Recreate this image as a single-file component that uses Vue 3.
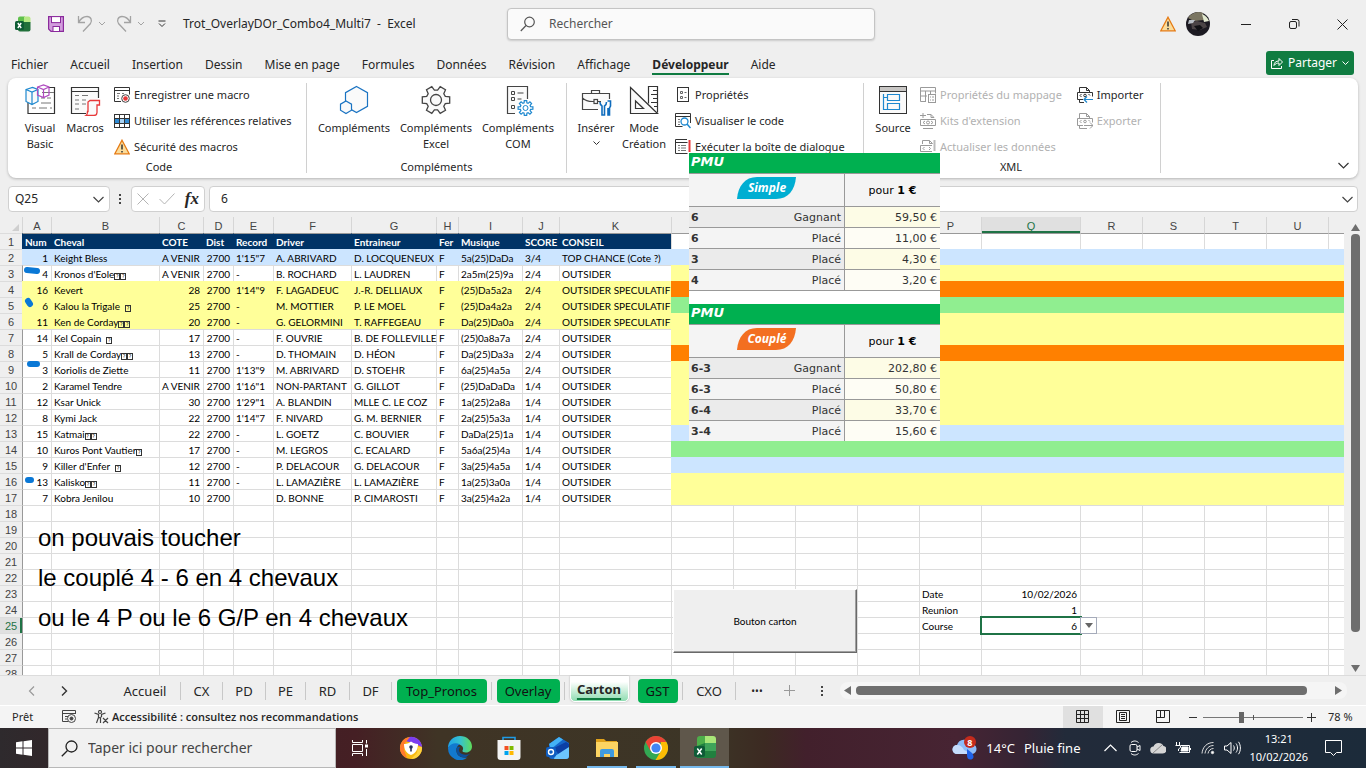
<template>
  <div class="window">
    <header class="titlebar">
      <div class="quick">
        <svg class="logo" width="16" height="16" viewBox="0 0 16 16">
          <path d="M3 2.5A2 2 0 0 1 5 .5h5v6H3z" fill="#5fc04b" />
          <path d="M9 .5h4.500a2 2 0 0 1 2 2v4H9z" fill="#b8e986" />
          <path d="M3 6h12.500v7.500a2 2 0 0 1-2 2H5a2 2 0 0 1-2-2z" fill="#21703a" />
          <rect x="0" y="5" width="9" height="9" rx="1.500" fill="#0d5c34" />
          <path d="M2.800 7l3.400 5M6.200 7l-3.400 5" stroke="#fff" stroke-width="1.400" />
        </svg>
        <button class="plain" aria-label="Enregistrer">
          <svg width="16" height="16" viewBox="0 0 16 16">
            <path d="M.6.600h14.800v14.800H3L.6 13z" fill="#d29ddd" stroke="#8a2a9c" stroke-width="1.200" />
            <rect x="3.500" y=".6" width="9" height="6" fill="#fff" stroke="#8a2a9c" />
            <rect x="5" y="10.500" width="6.500" height="5" fill="#fff" stroke="#8a2a9c" />
          </svg>
        </button>
        <button class="plain undo" aria-label="Annuler">
          <svg width="28" height="18" viewBox="0 0 28 18" fill="none" stroke="#a3a3a3">
            <path d="M1.500 1v6.500H8M1.500 7.500C4 3 7 1.500 10 1.500c4 0 5.500 4 3.500 7L6 16.500" stroke-width="1.300" />
            <path d="M22 7l3 3 3-3" />
          </svg>
        </button>
        <button class="plain redo" aria-label="Rétablir">
          <svg width="28" height="18" viewBox="0 0 28 18" fill="none" stroke="#a3a3a3">
            <path d="M14.500 1v6.500H8M14.500 7.500C12 3 9 1.500 6 1.500c-4 0-5.500 4-3.500 7l7.500 8" stroke-width="1.300" />
            <path d="M22 7l3 3 3-3" />
          </svg>
        </button>
        <button class="plain more" aria-label="Personnaliser">
          <svg width="8" height="8" viewBox="0 0 8 8" fill="none" stroke="#333"><path d="M.5 1h7M1 3.500l3 3 3-3" /></svg>
        </button>
        <span class="doc">Trot_OverlayDOr_Combo4_Multi7&nbsp; -&nbsp; Excel</span>
      </div>
      <label class="search">
        <svg width="16" height="16" viewBox="0 0 16 16" fill="none" stroke="#555" stroke-width="1.200"><circle cx="9.500" cy="6" r="4.800" /><path d="M6 9.500L.8 15" /></svg>
        <input type="text" placeholder="Rechercher" aria-label="Rechercher">
      </label>
      <div class="controls">
        <svg class="warn" width="16" height="16" viewBox="0 0 16 16"><path d="M8 1.200L15.200 14.800H.8z" fill="#fbdc9a" stroke="#e57a13" stroke-width="1.300" /><path d="M8 5.500v5M8 12v1.500" stroke="#333" stroke-width="1.500" /></svg>
        <svg class="avatar" width="24" height="24" viewBox="0 0 24 24">
          <circle cx="12" cy="12" r="12" fill="#1c1a22" />
          <path d="M2 6a12 12 0 0 1 15-5l1 7-10 1z" fill="#7b7662" />
          <path d="M16 2a12 12 0 0 1 7 7l-5 1z" fill="#e3ead0" />
          <path d="M5 10l6-1 8 2 2 4-7 3-8-1z" fill="#4b4446" />
          <path d="M3 8l6 0-2 3-5 1z" fill="#b9bfc6" />
          <path d="M8 14l6-1 3 3-5 3z" fill="#101014" />
        </svg>
        <button class="plain win" aria-label="Réduire"><svg width="11" height="12"><path d="M0 6.500h10" stroke="#222" /></svg></button>
        <button class="plain win" aria-label="Restaurer"><svg width="11" height="12" fill="none" stroke="#222"><rect x=".5" y="3.500" width="7" height="7" rx="1.500" /><path d="M3 1.500h5a2 2 0 0 1 2 2v5" /></svg></button>
        <button class="plain win" aria-label="Fermer"><svg width="11" height="12" stroke="#222"><path d="M.5 1.500l10 10M10.500 1.500l-10 10" /></svg></button>
      </div>
    </header>

    <nav class="tabs">
      <a v-for="t in tabs" :key="t" href="#" :class="{ active: t === 'Développeur' }">{{ t }}</a>
      <button class="share">
        <svg width="12" height="12" viewBox="0 0 12 12" fill="none" stroke="#fff"><path d="M3 3.500H.5v8h10V9M3 8.500c0-3 2-4.500 5-4.500V1.500l3.500 3.500L8 8.500V6C6 6 4.500 6.500 3 8.500z" /></svg>
        Partager
        <svg width="7" height="5" fill="none" stroke="#fff"><path d="M.5.500l3 3 3-3" /></svg>
      </button>
    </nav>

    <section class="ribbon">
      <div class="group code">
        <div class="tools">
          <button class="big w-vb">
            <svg width="32" height="32" viewBox="0 0 32 32" fill="none">
              <path d="M4 18v11.500h26.500v-26H24" stroke="#333" stroke-width="1.200" />
              <path d="M18 8.500h12M17 14h4M23 14h4M17 19h10M8 24h4M15 24h8M26 24h2" stroke="#777" />
              <path d="M2 5.500l6.500-2 5.500 2v12l-6 3-6-3zM2 5.500l6 2.500 6-2.500M8 8v12.500" fill="#fafafa" stroke="#1e88cf" stroke-width="1.200" />
              <path d="M13.500 3l6-2 5.500 2v8l-5.500 2.500-6-2.500zM13.500 3l6 2.500L25 3M19.500 5.500v8" stroke="#b04bc0" stroke-width="1.200" />
            </svg>
            <span>Visual<br>Basic</span>
          </button>
          <button class="big w-macros">
            <svg width="32" height="32" viewBox="0 0 32 32" fill="none">
              <path d="M17 29.500H2.500v-26H29.500V14M2.500 7.500h27" stroke="#333" stroke-width="1.200" fill="#fafafa" />
              <path d="M6 11.500h4M13 11.500h6M6 16h4M13 16h4M6 20h4M13 20h4M6 25h4" stroke="#777" />
              <path d="M21 16.500h9.500V21H28v7.500c0 2-1 3-3 3h-8c1.500-1 1.500-2 1.500-4H19V18z" fill="#fafafa" stroke="#e8393a" stroke-width="1.300" />
            </svg>
            <span>Macros</span>
          </button>
          <div class="stack">
            <button class="small">
              <svg width="16" height="16" viewBox="0 0 16 16" fill="none"><path d="M7 14.500H.5V.5h15v7M.5 3.500h15" stroke="#333" /><path d="M3 6.500h3M3 9h2M3 11.500h2M8 6.500h2" stroke="#777" /><circle cx="11.500" cy="11.500" r="3.800" stroke="#444" fill="#fff" /><circle cx="11.500" cy="11.500" r="2.300" fill="#e8393a" /></svg>
              Enregistrer une macro
            </button>
            <button class="small">
              <svg width="16" height="14" viewBox="0 0 16 14" fill="none"><rect x=".5" y=".5" width="15" height="13" stroke="#333" fill="#fff" /><rect x="1" y="4.500" width="4" height="5" fill="#2f8ad2" /><rect x="11" y="4.500" width="4" height="5" fill="#2f8ad2" /><rect x="6" y="4.500" width="4" height="5" fill="#a9d2f3" /><path d="M5.500 0v14M10.500 0v14M0 4.500h16M0 9.500h16" stroke="#333" /></svg>
              Utiliser les références relatives
            </button>
            <button class="small">
              <svg width="16" height="16" viewBox="0 0 16 16"><path d="M8 1.200L15.200 14.800H.8z" fill="#fbdc9a" stroke="#e57a13" stroke-width="1.300" /><path d="M8 5.500v5M8 12v1.500" stroke="#333" stroke-width="1.500" /></svg>
              Sécurité des macros
            </button>
          </div>
        </div>
        <div class="caption">Code</div>
      </div>

      <div class="group addins">
        <div class="tools">
          <button class="big w-add">
            <svg width="32" height="32" viewBox="0 0 32 32" fill="#fafafa" stroke="#1a73c2" stroke-width="1.200"><path d="M18.500 2.500l11 6.200v13.600l-11 6.200-11-6.200V8.700z" /><path d="M8 17l5.500 3.200v6L8 29.500l-5.500-3.300v-6z" /></svg>
            <span>Compléments</span>
          </button>
          <button class="big w-add">
            <svg width="32" height="32" viewBox="0 0 32 32" fill="#fafafa" stroke="#444" stroke-width="1.300"><path :d="gear(16, 16, 14, 10, 6)" /><circle cx="16" cy="16" r="5.500" /></svg>
            <span>Compléments<br>Excel</span>
          </button>
          <button class="big w-add">
            <svg width="32" height="32" viewBox="0 0 32 32" fill="none" stroke="#444"><path d="M13 29.500H5.500v-27h20V15" fill="#fafafa" stroke-width="1.200" /><path d="M9.500 7.500h3v3h-3zM9.500 13.500h3v3h-3zM9.500 21.500h3v3h-3zM15.500 9h6M15.500 15h4" /><path :d="gear(23.500, 24, 7.500, 5.300, 8)" stroke="#1e88cf" fill="#fff" stroke-width="1.200" /><circle cx="23.500" cy="24" r="2.500" stroke="#1e88cf" /></svg>
            <span>Compléments<br>COM</span>
          </button>
        </div>
        <div class="caption">Compléments</div>
      </div>

      <div class="group forms">
        <div class="tools">
          <button class="big w-ins">
            <svg width="32" height="32" viewBox="0 0 32 32" fill="none" stroke="#444" stroke-width="1.200"><path d="M11.500 9V6.500h8V9M18 25.500H2.500V9.500h27V15M2.500 14c4 4 8 3.500 11.500 3.500M18 17.500h3" fill="#fafafa" /><rect x="14" y="15.500" width="3.500" height="4" /><path d="M20 18c0 3 1.500 3.500 2 4v9h2.500v-9c1-.5 2-1.500 2-4M27.500 17h3v5l-1 2v7h-1.500v-7" stroke="#0f6cbd" stroke-width="1.600" /></svg>
            <span>Insérer</span>
            <svg width="7" height="5" fill="none" stroke="#333"><path d="M.5.500l3 3 3-3" /></svg>
          </button>
          <button class="big w-mode">
            <svg width="32" height="32" viewBox="0 0 32 32" fill="none" stroke="#333" stroke-width="1.200"><path d="M2.500 3.500v26h27zM7.500 17v7.500h8z" fill="#fafafa" /><path d="M20.500 19.500v-17h9v26M29 6.500h-4M29 10.500h-6M29 14.500h-4M29 18.500h-6M29 22.500h-3" /></svg>
            <span>Mode<br>Création</span>
          </button>
          <div class="stack">
            <button class="small">
              <svg width="16" height="16" viewBox="0 0 16 16" fill="none" stroke="#333"><rect x="2.500" y=".5" width="11" height="14" /><path d="M5.500 4.500h2v2h-2zM5.500 9.500h2v2h-2zM9.500 5.500h2M9.500 10.500h2" stroke="#666" /></svg>
              Propriétés
            </button>
            <button class="small">
              <svg width="16" height="16" viewBox="0 0 16 16" fill="none"><path d="M15.500 10V.5H.5v13h7M.5 3.500h15" stroke="#333" /><path d="M3 6.500h2M3 9h2M3 11.500h2" stroke="#777" /><circle cx="9.500" cy="8.500" r="3.500" stroke="#1e88cf" stroke-width="1.300" /><path d="M12 11l3.500 4" stroke="#1e88cf" stroke-width="1.500" /></svg>
              Visualiser le code
            </button>
            <button class="small">
              <svg width="16" height="16" viewBox="0 0 16 16" fill="none"><path d="M12 .5H.5v14h12M.5 3.500h12" stroke="#333" /><path d="M3 6.500h2M6 6.500h5M3 9h2M6 9h5M3 11.500h2M6 11.500h5" stroke="#777" /><path d="M14.500 1v12" stroke="#e8393a" stroke-width="2" /></svg>
              Exécuter la boîte de dialogue
            </button>
          </div>
        </div>
      </div>

      <div class="group xml">
        <div class="tools">
          <button class="big w-src">
            <svg width="32" height="32" viewBox="0 0 32 32" fill="none"><rect x="2.500" y="2.500" width="27" height="27" stroke="#333" fill="#fafafa" /><rect x="3" y="3" width="26" height="4" fill="#c8c6c4" /><path d="M2.500 7.500h27" stroke="#333" /><path d="M6.500 10v15.500h4M6.500 13.500h4M10.500 10.500h12v6h-12zM10.500 19.500h12v6h-12z" stroke="#1e88cf" stroke-width="1.200" /></svg>
            <span>Source</span>
          </button>
          <div class="stack">
            <button class="small" disabled>
              <svg width="16" height="16" viewBox="0 0 16 16" fill="none" stroke="#9a9a9a"><path d="M6 14.500H.5V.5h15v6M0 4h16M0 9h7M5.500 4v11M10.500 4v3" /><rect x="8.500" y="7.500" width="7" height="8" /><path d="M10 10h1M12 10h2M10 13h1M12 13h2" /></svg>
              Propriétés du mappage
            </button>
            <button class="small" disabled>
              <svg width="16" height="16" viewBox="0 0 16 16" fill="none" stroke="#9a9a9a"><path d="M3 0v5M0 2.500h6M7 1.500h4l3 3M11 1.500v3h3M.5 6.500h15v6H.5zM3 15.500h10" /><path d="M5 8L3 9.500 5 11M11 8l2 1.500L11 11" /><circle cx="8" cy="9.500" r="1.500" /></svg>
              Kits d'extension
            </button>
            <button class="small" disabled>
              <svg width="16" height="16" viewBox="0 0 16 16" fill="none" stroke="#9a9a9a"><path d="M2.500 5V1.500h7l3 3M9.500 1.500v3h3M12 6.500H.5v6H12M2.500 15.500h10" /><path d="M4.500 8L3 9.500 4.500 11M9 8l1.500 1.500L9 11" /><path d="M14.500 1v11" stroke-width="2" stroke="#bbb" /></svg>
              Actualiser les données
            </button>
          </div>
          <div class="stack io">
            <button class="small">
              <svg width="16" height="16" viewBox="0 0 16 16" fill="none" stroke="#333"><path d="M2.500 5V.5h7l3 3V5M9.500.500v3h3M6 12.500H.5v-7h15v4M2.500 12v3.500H7" /><path d="M4.500 7L3 8.500 4.500 10M11.500 7L13 8.500" /><circle cx="8" cy="8.500" r="1.300" /><path d="M16 12.500H7M10 9.500l-3 3 3 3" stroke="#1e88cf" stroke-width="1.200" /></svg>
              Importer
            </button>
            <button class="small" disabled>
              <svg width="16" height="16" viewBox="0 0 16 16" fill="none" stroke="#9a9a9a"><path d="M2.500 5V.5h7l3 3V5M9.500.500v3h3M6 12.500H.5v-7h15v4M2.500 12v3.500H10" /><path d="M4.500 7L3 8.500 4.500 10M11.500 7L13 8.500" /><circle cx="8" cy="8.500" r="1.300" /><path d="M7 12.500h9M13 9.500l3 3-3 3" /></svg>
              Exporter
            </button>
          </div>
        </div>
        <div class="caption">XML</div>
      </div>
      <button class="plain collapse" aria-label="Réduire le ruban"><svg width="11" height="7" fill="none" stroke="#333" stroke-width="1.200"><path d="M.5 1l5 5 5-5" /></svg></button>
    </section>

    <section class="formula">
      <div class="box name">
        <input type="text" value="Q25" aria-label="Zone Nom">
        <svg width="11" height="7" fill="none" stroke="#444" stroke-width="1.200"><path d="M.5 1l5 5 5-5" /></svg>
      </div>
      <svg class="dots" width="3" height="12" fill="#444"><path d="M0 1h2v2H0zM0 5h2v2H0zM0 9h2v2H0z" /></svg>
      <div class="box fx">
        <svg width="12" height="12" stroke="#b4b4b4"><path d="M.5.500l11 11M11.500.500l-11 11" /></svg>
        <svg width="16" height="12" fill="none" stroke="#b4b4b4"><path d="M.5 6l5 5L15.500.500" /></svg>
        <i>fx</i>
      </div>
      <div class="box bar">
        <input type="text" value="6" aria-label="Barre de formule">
        <svg width="11" height="7" fill="none" stroke="#444" stroke-width="1.200"><path d="M.5 1l5 5 5-5" /></svg>
      </div>
    </section>

    <main class="sheet">
      <div class="grid">
        <table>
          <colgroup>
            <col class="c-row">
            <col v-for="c in cols" :key="c" :class="'c-' + c">
            <col>
          </colgroup>
          <thead>
            <tr>
              <th class="corner"><svg width="7" height="7"><path d="M7 0v7H0z" fill="#cfcfcf" /></svg></th>
              <th v-for="c in cols" :key="c" :class="{ current: c === 'Q' }">{{ c }}</th>
              <th></th>
            </tr>
          </thead>
          <tbody>
            <tr v-for="n in 28" :key="n">
              <th :class="{ current: n === 25 }">{{ n }}</th>
              <td v-for="(c, i) in allCols" :key="c" :class="cellClass(n, c, i)">
                <template v-if="n <= 17 && c === 'B'">{{ horse(n).name }}<i v-for="k in horse(n).boxes" :key="k" class="tofu">?</i></template>
                <template v-else>{{ cell(n, c, i) }}</template>
                <button v-if="n === 25 && c === 'Q'" class="drop" aria-label="Choisir la course"><svg width="8" height="5"><path d="M0 0h8L4 5z" fill="#666" /></svg></button>
              </td>
            </tr>
          </tbody>
        </table>
        <svg class="marks" width="24" height="280" viewBox="0 0 24 280" stroke="#0a78d6" stroke-width="6" stroke-linecap="round" fill="none">
          <path d="M5 53l10 1M6 84l2 3M8 147h7M6 263h3" />
        </svg>
        <button class="carton">Bouton carton</button>
        <p class="memo">on pouvais toucher<br>le couplé 4 - 6 en 4 chevaux<br>ou le 4 P ou le 6 G/P en 4 chevaux</p>
      </div>
      <div class="vscroll">
        <svg width="9" height="7"><path d="M4.500 0L9 7H0z" fill="#6e6e6e" /></svg>
        <div class="vthumb"></div>
        <svg width="9" height="7"><path d="M4.500 7L9 0H0z" fill="#6e6e6e" /></svg>
      </div>
    </main>

    <section class="sheets">
      <div class="arrows">
        <svg width="7" height="10" fill="none" stroke="#999" stroke-width="1.200"><path d="M6 .5L1.500 5 6 9.500" /></svg>
        <svg width="7" height="10" fill="none" stroke="#333" stroke-width="1.400"><path d="M1 .5L5.500 5 1 9.500" /></svg>
      </div>
      <div v-for="s in sheets" :key="s.name" class="tab" :class="s.kind" :style="{ width: s.w + 'px' }">
        <button>{{ s.name }}</button>
      </div>
      <button class="plain tool">•••</button>
      <button class="plain tool add" aria-label="Nouvelle feuille"><svg width="11" height="11" stroke="#999"><path d="M5.500 0v11M0 5.500h11" /></svg></button>
      <svg class="vdots" width="3" height="12" fill="#444"><path d="M0 1h2v2H0zM0 5h2v2H0zM0 9h2v2H0z" /></svg>
      <div class="hscroll">
        <svg width="7" height="9"><path d="M0 4.500L7 0v9z" fill="#6e6e6e" /></svg>
        <div class="hthumb"></div>
        <svg width="7" height="9"><path d="M7 4.500L0 0v9z" fill="#6e6e6e" /></svg>
      </div>
    </section>

    <footer class="status">
      <span class="ready">Prêt</span>
      <svg width="15" height="14" viewBox="0 0 15 14" fill="none" stroke="#444"><path d="M6 11.500H.5V.5h13V4M.5 3.500h13M3 6.500h3M3 9h2" /><circle cx="9.500" cy="8.500" r="4" /><circle cx="9.500" cy="8.500" r="1.500" fill="#444" /></svg>
      <svg class="acc" width="15" height="14" viewBox="0 0 15 14" fill="none" stroke="#444" stroke-width="1.200"><circle cx="6" cy="2" r="1.500" /><path d="M.5 3l4 1.500v3L2.500 13M11.500 3l-4 1.500v2.500M4.500 8l3-1M6.500 8v5M9 8l5 5M14 8l-5 5" /></svg>
      <b>Accessibilité : consultez nos recommandations</b>
      <div class="views">
        <button class="view on" aria-label="Normal"><svg width="14" height="14" fill="none" stroke="#222"><path d="M.5.500h12v12H.5zM4.500.500v12M8.500.500v12M.5 4.500h12M.5 8.500h12" /></svg></button>
        <button class="view" aria-label="Mise en page"><svg width="14" height="14" fill="none" stroke="#222"><path d="M.5.500h13v12H.5zM3.500 2.500h7v8h-7zM5 4.500h4M5 6.500h4M5 8.500h4" /></svg></button>
        <button class="view" aria-label="Aperçu des sauts de page"><svg width="14" height="14" fill="none" stroke="#222"><path d="M.5.500h13v12H.5zM4.500.500v7M8.500.500v7H.5" /></svg></button>
        <svg class="minus" width="8" height="9" stroke="#333"><path d="M0 4.500h8" /></svg>
        <input type="range" min="0" max="100" value="38" aria-label="Zoom">
        <svg width="9" height="9" stroke="#333"><path d="M0 4.500h9M4.500 0v9" /></svg>
        <span class="pct">78 %</span>
      </div>
    </footer>

    <footer class="taskbar">
      <button class="start" aria-label="Démarrer"><svg width="16" height="16" fill="#fff"><path d="M0 2.200l6.500-.9v6.200H0zM7.500 1.200L16 0v7.500H7.500zM0 8.500h6.500v6.200L0 13.800zM7.500 8.500H16V16l-8.500-1.200z" /></svg></button>
      <label class="tsearch">
        <svg width="17" height="17" fill="none" stroke="#222" stroke-width="1.300"><circle cx="10.500" cy="6.500" r="5.500" /><path d="M6.500 10.500L.8 16.200" /></svg>
        <input type="text" placeholder="Taper ici pour rechercher" aria-label="Taper ici pour rechercher">
      </label>
      <button class="app"><svg width="17" height="16" fill="none" stroke="#fff"><path d="M.5 0v2.500h10V0M.5 4.500h10v7H.5zM.5 16v-2.500h10V16M14.500 0v3.500M14.500 9v7" /><path d="M13 4.500h3v3h-3z" fill="#fff" stroke="none" /></svg></button>
      <button class="app gap">
        <svg width="24" height="24" viewBox="0 0 24 24"><circle cx="12" cy="12" r="11" fill="#f8b912" /><path d="M10 1A11 11 0 0 1 23 11L14 7 6 5z" fill="#7a3df0" /><path d="M1 13A11 11 0 0 1 11 1L6 7 5 14l3 8A11 11 0 0 1 1 13z" fill="#ff7a2d" /><path d="M23 11a11 11 0 0 1-11 12l6-6 1-6z" fill="#ffd23e" /><path d="M5 8c4 0 5-1 7-2.500C14 7 16 8 19 8c0 5-2 9-7 11-5-2-7-6-7-11z" fill="#fff" /><circle cx="12" cy="11" r="1.800" fill="#26315c" /><path d="M11.200 12h1.600v3.500h-1.600z" fill="#26315c" /></svg>
      </button>
      <button class="app">
        <svg width="24" height="24" viewBox="0 0 24 24">
          <defs>
            <linearGradient id="wave" x1="0" x2="1"><stop offset="0" stop-color="#1fa2e8" /><stop offset="0.500" stop-color="#35c1d0" /><stop offset="1" stop-color="#5fdc5a" /></linearGradient>
          </defs>
          <path d="M0 12C0 5 5 0 12 0s12 5 12 10.500c0 3.500-2.500 6-6 6-2.500 0-4-1-3.500-2 .8-1 1-3-.5-4.500-3-3-10-3-14 2z" fill="url(#wave)" />
          <path d="M0 12c2-4.500 8-6 12-3.500-3 1-4 4-3.500 7C9 20 14 22.500 19.500 21.500A12 12 0 0 1 0 12z" fill="#1279cf" />
          <path d="M8.500 12.500C7.500 18 12 22 17.500 21.500l5-4C19 19.500 13.500 19 11.500 16c-1-1.500-.5-3.500.5-5-1.500-.5-3 0-3.500 1.500z" fill="#0b4f9c" />
        </svg>
      </button>
      <button class="app">
        <svg width="24" height="24" viewBox="0 0 24 24"><path d="M6 6V1.500h12V6" fill="none" stroke="#1f9be6" stroke-width="1.600" /><path d="M.5 4h23v17a3 3 0 0 1-3 3h-17a3 3 0 0 1-3-3z" fill="#f4f4f4" /><path d="M7.500 10h4v4h-4z" fill="#f25022" /><path d="M12.500 10h4v4h-4z" fill="#7fba00" /><path d="M7.500 15h4v4h-4z" fill="#00a4ef" /><path d="M12.500 15h4v4h-4z" fill="#ffb900" /></svg>
      </button>
      <button class="app">
        <svg width="24" height="24" viewBox="0 0 24 24"><path d="M3 8L13 1l10 6v13a3 3 0 0 1-3 3H6a3 3 0 0 1-3-3z" fill="#1565c8" /><path d="M3 8l10-7 4 2.500L5 13z" fill="#43b2f5" /><path d="M8 12l12-6 3 2v4l-10 7z" fill="#0b3fa5" /><path d="M9 20l14-9v9a3 3 0 0 1-3 3H8z" fill="#6cc6ff" /><rect y="11" width="10" height="10" rx="2" fill="#0f5dc0" /><circle cx="5" cy="16" r="2.500" fill="none" stroke="#fff" stroke-width="1.400" /></svg>
      </button>
      <button class="app open">
        <svg width="24" height="24" viewBox="0 0 24 24"><path d="M1 3h8l2 2h11v4H1z" fill="#e0a21b" /><path d="M1 6h22v15H1z" fill="#fcd462" /><path d="M5 21v-6a2 2 0 0 1 2-2h10a2 2 0 0 1 2 2v6h-4v-3H9v3z" fill="#3f9be0" /></svg>
      </button>
      <button class="app open">
        <svg width="24" height="24" viewBox="0 0 24 24"><circle cx="12" cy="12" r="12" fill="#33a853" /><path d="M1.600 6A12 12 0 0 1 22.400 6L12 7 6.500 15z" fill="#ea4335" /><path d="M22.400 6A12 12 0 0 1 11.500 24L17 15V6z" fill="#fbbc05" /><circle cx="12" cy="12" r="6" fill="#fff" /><circle cx="12" cy="12" r="4.600" fill="#4285f4" /></svg>
      </button>
      <button class="app current">
        <svg width="24" height="24" viewBox="0 0 24 24"><path d="M4 4a3 3 0 0 1 3-3h7v10H4z" fill="#4dae4a" /><path d="M12 1h8a3 3 0 0 1 3 3v5H12z" fill="#a8e678" /><path d="M4 11l8-3h11v12a3 3 0 0 1-3 3H4z" fill="#21803f" /><path d="M12 8h11v8H12z" fill="#3fa45a" /><rect x="1" y="11" width="11" height="11" rx="2" fill="#0e5c37" /><path d="M4.300 13.500l4.400 6M8.700 13.500l-4.400 6" stroke="#fff" stroke-width="1.500" /></svg>
      </button>
      <div class="tray">
        <div class="weather">
          <svg width="25" height="24" viewBox="0 0 25 24"><path d="M5 18a4.500 4.500 0 0 1 0-9 7.500 7.500 0 0 1 14-1 5 5 0 0 1 1 10z" fill="#8dbcf8" /><path d="M5 18a4.500 4.500 0 0 1 0-9c3 0 6 2 7 5l8 4z" fill="#c5dcfb" /><path d="M15 13l5 4c3 4 1 6.500-1.500 6.500S15 22 15 19z" fill="#1f62e8" /><circle cx="18" cy="6" r="6" fill="#c42b1c" /><text x="15.200" y="9.500">8</text></svg>
          <span>14°C</span>
          <span>Pluie fine</span>
        </div>
        <svg class="up" width="13" height="8" fill="none" stroke="#fff" stroke-width="1.200"><path d="M.5 7l6-6 6 6" /></svg>
        <svg width="12" height="16" fill="none" stroke="#fff"><path d="M2 2.500c2.500-2 5-2 7.500 0M2 13.500c2.500 2 5 2 7.500 0" /><rect x="1" y="4.500" width="7" height="7" rx="1.500" /><path d="M8 7l3-1.500v5L8 9" /></svg>
        <svg width="16" height="12"><path d="M4 11.500a3.500 3.500 0 0 1-.5-7 5.500 5.500 0 0 1 10-.5 3.800 3.800 0 0 1-1 7.500z" fill="#d5d5d5" /><path d="M3 11L12 3" stroke="#8b8b8b" /></svg>
        <svg width="17" height="12" fill="none" stroke="#fff"><path d="M1.500 0v3M4.500 0v3M.5 3.500h5v2l-2 1.500v2" /><path d="M6 3.500h8.500v7h-10M15.500 6v2" /><path d="M7 5h6v4H6z" fill="#fff" /></svg>
        <svg width="14" height="14" viewBox="0 0 14 14" fill="none" stroke="#ddd"><path d="M1 12.500C1.500 6 6 1.500 12.500 1.500M4 12.500C4.500 8 8 4.500 12.500 4.500M7 12.500c.5-3 2.500-5 5.500-5" /><circle cx="11.500" cy="11.500" r="1.200" fill="#fff" /></svg>
        <svg width="17" height="14" fill="none" stroke="#fff"><path d="M.5 5h2.500l4-3.500v11L3 9H.5zM9.500 4.500c1 1.500 1 3.500 0 5M12 2.500c2 2.500 2 6.500 0 9M14.500.800c2.500 3.500 2.500 9 0 12.400" /></svg>
        <div class="clock">13:21<br>10/02/2026</div>
        <svg class="notif" width="17" height="16" fill="none" stroke="#fff"><path d="M.5.500h16v12h-5L8.500 15.500l-3-3h-5z" /></svg>
      </div>
    </footer>

    <aside class="results">
      <section v-for="r in results" :key="r.title" class="pmu">
        <h3>PMU</h3>
        <table>
          <thead>
            <tr>
              <th colspan="2">
                <svg width="60" height="22" viewBox="0 0 60 22"><path d="M0 22C1 9 8 0 20 0h39C58 13 51 22 39 22z" :fill="r.color" /><text x="30" y="15" text-anchor="middle">{{ r.title }}</text></svg>
              </th>
              <th class="price">pour <b>1 €</b></th>
            </tr>
          </thead>
          <tbody>
            <tr v-for="(l, i) in r.lines" :key="i">
              <th>{{ l[0] }}</th>
              <td>{{ l[1] }}</td>
              <td class="price">{{ l[2] }}</td>
            </tr>
          </tbody>
        </table>
      </section>
    </aside>
  </div>
</template>

<script setup>
const tabs = ['Fichier', 'Accueil', 'Insertion', 'Dessin', 'Mise en page', 'Formules', 'Données', 'Révision', 'Affichage', 'Développeur', 'Aide']

const cols = 'ABCDEFGHIJKLMNOPQRSTU'.split('')
const allCols = [...cols, 'V']

// each * after a horse's name is a character the font has no glyph for
const data = [
  ['Num', 'Cheval', 'COTE', 'Dist', 'Record', 'Driver', 'Entraineur', 'Fer', 'Musique', 'SCORE', 'CONSEIL'],
  [1, 'Keight Bless', 'A VENIR', 2700, '1\'15"7', 'A. ABRIVARD', 'D. LOCQUENEUX', 'F', '5a(25)DaDa', '3/4', 'TOP CHANCE (Cote ?)'],
  [4, "Kronos d'Eole**", 'A VENIR', 2700, '-', 'B. ROCHARD', 'L. LAUDREN', 'F', '2a5m(25)9a', '2/4', 'OUTSIDER'],
  [16, 'Kevert', 28, 2700, '1\'14"9', 'F. LAGADEUC', 'J.-R. DELLIAUX', 'F', '(25)Da5a2a', '2/4', 'OUTSIDER SPECULATIF'],
  [6, 'Kalou la Trigale\u00a0 *', 25, 2700, '-', 'M. MOTTIER', 'P. LE MOEL', 'F', '(25)Da4a2a', '2/4', 'OUTSIDER SPECULATIF'],
  [11, 'Ken de Corday**', 20, 2700, '-', 'G. GELORMINI', 'T. RAFFEGEAU', 'F', 'Da(25)Da0a', '2/4', 'OUTSIDER SPECULATIF'],
  [14, 'Kel Copain\u00a0 *', 17, 2700, '-', 'F. OUVRIE', 'B. DE FOLLEVILLE', 'F', '(25)0a8a7a', '2/4', 'OUTSIDER'],
  [5, 'Krall de Corday**', 13, 2700, '-', 'D. THOMAIN', 'D. HÉON', 'F', 'Da(25)Da3a', '2/4', 'OUTSIDER'],
  [3, 'Koriolis de Ziette', 11, 2700, '1\'13"9', 'M. ABRIVARD', 'D. STOEHR', 'F', '6a(25)4a5a', '2/4', 'OUTSIDER'],
  [2, 'Karamel Tendre', 'A VENIR', 2700, '1\'16"1', 'NON-PARTANT', 'G. GILLOT', 'F', '(25)DaDaDa', '1/4', 'OUTSIDER'],
  [12, 'Ksar Unick', 30, 2700, '1\'29"1', 'A. BLANDIN', 'MLLE C. LE COZ', 'F', '1a(25)2a8a', '1/4', 'OUTSIDER'],
  [8, 'Kymi Jack', 22, 2700, '1\'14"7', 'F. NIVARD', 'G. M. BERNIER', 'F', '2a(25)5a3a', '1/4', 'OUTSIDER'],
  [15, 'Katmai**', 22, 2700, '-', 'L. GOETZ', 'C. BOUVIER', 'F', 'DaDa(25)1a', '1/4', 'OUTSIDER'],
  [10, 'Kuros Pont Vautier*', 17, 2700, '-', 'M. LEGROS', 'C. ECALARD', 'F', '5a6a(25)4a', '1/4', 'OUTSIDER'],
  [9, "Killer d'Enfer\u00a0 *", 12, 2700, '-', 'P. DELACOUR', 'G. DELACOUR', 'F', '3a(25)4a5a', '1/4', 'OUTSIDER'],
  [13, 'Kalisko**', 11, 2700, '-', 'L. LAMAZIÈRE', 'L. LAMAZIÈRE', 'F', '1a(25)3a0a', '1/4', 'OUTSIDER'],
  [7, 'Kobra Jenilou', 10, 2700, '', 'D. BONNE', 'P. CIMAROSTI', 'F', '3a(25)4a2a', '1/4', 'OUTSIDER'],
]

const extra = {
  P23: 'Date', Q23: '10/02/2026',
  P24: 'Reunion', Q24: '1',
  P25: 'Course', Q25: '6',
}

// fill of the L:V band, one entry per sheet row
const bands = ['', '', 'blue', 'yellow', 'orange', 'green', 'yellow', 'yellow', 'orange', 'yellow', 'yellow', 'yellow', 'yellow', 'blue', 'green', 'blue', 'yellow', 'yellow']

const cell = (n, c, i) => {
  if (n <= data.length && i < 11) return data[n - 1][i]
  return extra[c + n] || ''
}

const horse = (n) => {
  const parts = data[n - 1][1].split('*')
  return { name: parts[0], boxes: parts.length - 1 }
}

const cellClass = (n, c, i) => {
  const out = []
  if (i < 11) {
    if (n === 1) out.push('head')
    if (n === 2) out.push('blue')
    if (n >= 4 && n <= 6) out.push('yellow')
  } else if (bands[n]) {
    out.push(bands[n])
  }
  if (n > 1 && typeof cell(n, c, i) === 'number') out.push('num')
  if (c === 'Q') out.push('num')
  if (n === 25 && c === 'Q') out.push('selected')
  return out
}

const sheets = [
  { name: 'Accueil', w: 71 },
  { name: 'CX', w: 42 },
  { name: 'PD', w: 43 },
  { name: 'PE', w: 40 },
  { name: 'RD', w: 44 },
  { name: 'DF', w: 42 },
  { name: 'Top_Pronos', w: 100, kind: 'green' },
  { name: 'Overlay', w: 73, kind: 'green' },
  { name: 'Carton', w: 68, kind: 'front' },
  { name: 'GST', w: 50, kind: 'green' },
  { name: 'CXO', w: 53 },
]

const results = [
  {
    title: 'Simple',
    color: '#00aed2',
    lines: [['6', 'Gagnant', '59,50 €'], ['6', 'Placé', '11,00 €'], ['3', 'Placé', '4,30 €'], ['4', 'Placé', '3,20 €']],
  },
  {
    title: 'Couplé',
    color: '#f36f21',
    lines: [['6-3', 'Gagnant', '202,80 €'], ['6-3', 'Placé', '50,80 €'], ['6-4', 'Placé', '33,70 €'], ['3-4', 'Placé', '15,60 €']],
  },
]

const gear = (cx, cy, outer, inner, teeth) => {
  const pts = []
  const w = 2.2 / teeth
  for (let k = 0; k < teeth; k++) {
    const a = (k * 2 * Math.PI) / teeth
    for (const [da, r] of [[-w, inner], [-w * 0.6, outer], [w * 0.6, outer], [w, inner]]) {
      pts.push((cx + r * Math.cos(a + da)).toFixed(1) + ' ' + (cy + r * Math.sin(a + da)).toFixed(1))
    }
  }
  return 'M' + pts.join('L') + 'z'
}
</script>

<style>
body {
  background: #efefef;
}
</style>

<style scoped>
.window {
  position: relative;
  display: flex;
  flex-direction: column;
  height: 100vh;
  overflow: hidden;
  background: #efefef;
  color: #262626;
  font: 12px/16px "Noto Sans", "Open Sans", sans-serif;
}

.window * {
  box-sizing: border-box;
}

button,
input {
  font: inherit;
  color: inherit;
  border: 0;
  margin: 0;
  padding: 0;
  background: none;
}

svg {
  display: block;
  flex: none;
}

/* title bar */
.titlebar {
  display: grid;
  grid-template-columns: 507px minmax(160px, 368px) 1fr;
  align-items: center;
  flex: none;
  height: 48px;
}

.quick {
  display: flex;
  align-items: center;
  padding-left: 15px;
}

.logo {
  margin-right: 17px;
}

.undo {
  margin-left: 13px;
}

.redo {
  margin-left: 11px;
}

.more {
  margin: 0 17px 0 14px;
}

.doc {
  white-space: nowrap;
}

.search {
  display: flex;
  align-items: center;
  gap: 13px;
  height: 32px;
  padding: 0 12px;
  background: #fafafa;
  border: 1px solid #c4c4c4;
  border-radius: 4px;
  box-shadow: 0 1px 2px rgba(0, 0, 0, 0.15);
}

.search input {
  flex: 1;
  min-width: 0;
}

input::placeholder {
  color: #555;
  opacity: 1;
}

.controls {
  display: flex;
  justify-content: flex-end;
  align-items: center;
}

.avatar {
  margin: 0 12px 0 10px;
}

.win {
  display: flex;
  justify-content: center;
  width: 48px;
}

/* ribbon tabs */
.tabs {
  display: flex;
  align-items: center;
  gap: 22px;
  flex: none;
  height: 30px;
  padding: 0 12px 0 11px;
}

.tabs a {
  padding-top: 2px;
  line-height: 21px;
  color: inherit;
  text-decoration: none;
  white-space: nowrap;
}

.tabs a.active {
  font-weight: bold;
  box-shadow: inset 0 -2px #0f7b41;
}

.share {
  display: flex;
  align-items: center;
  justify-content: space-between;
  width: 88px;
  height: 24px;
  margin-left: auto;
  padding: 0 5px;
  background: #107c41;
  border-radius: 3px;
  color: #fff;
}

/* ribbon */
.ribbon {
  display: flex;
  flex: none;
  height: 100px;
  margin: 0 8px;
  padding: 5px 0 5px;
  background: #fff;
  border-radius: 8px;
  box-shadow: 0 1px 3px rgba(0, 0, 0, 0.25);
  font-size: 11px;
}

.group {
  display: flex;
  flex-direction: column;
  justify-content: space-between;
  flex: none;
  border-right: 1px solid #d0d0d0;
}

.code {
  width: 299px;
  padding-left: 10px;
}

.addins {
  width: 260px;
  padding-left: 6px;
}

.forms {
  width: 297px;
  padding-left: 6px;
}

.xml {
  width: 297px;
  padding-left: 4px;
}

.caption {
  margin-left: -6px;
  text-align: center;
  line-height: 12px;
}

.tools {
  display: flex;
}

.big {
  display: flex;
  flex-direction: column;
  align-items: center;
  padding-top: 1px;
}

.big span {
  margin-top: 4px;
  white-space: nowrap;
}

.w-vb {
  width: 44px;
}

.w-macros,
.w-ins {
  width: 46px;
}

.w-add {
  width: 82px;
}

.w-mode,
.w-src {
  width: 50px;
}

.big span + svg {
  margin-top: 5px;
}

.stack {
  display: flex;
  flex-direction: column;
  margin: -1px 0 0 6px;
}

.xml .stack {
  margin-left: 2px;
}

.xml .io {
  margin-left: 15px;
}

.small {
  display: flex;
  align-items: center;
  gap: 4px;
  height: 26px;
  white-space: nowrap;
}

.small:disabled {
  color: #b1b1b1;
}

.collapse {
  align-self: flex-end;
  margin: 0 9px 4px auto;
}

/* formula bar */
.formula {
  display: flex;
  align-items: center;
  flex: none;
  height: 39px;
  padding: 3px 8px 0;
}

.box {
  display: flex;
  align-items: center;
  height: 26px;
  background: #fff;
  border: 1px solid #d0d0d0;
  border-radius: 4px;
}

.box input {
  flex: 1;
  min-width: 0;
}

.name {
  width: 102px;
  padding: 0 5px 0 6px;
}

.dots {
  margin: 0 9px;
}

.fx {
  justify-content: space-between;
  width: 74px;
  padding: 0 5px;
}

.fx i {
  font: italic bold 17px/20px "Liberation Serif", serif;
}

.bar {
  flex: 1;
  margin-left: 4px;
  padding: 0 4px 0 11px;
}

/* sheet */
.sheet {
  display: flex;
  flex: 1;
  min-height: 0;
}

.grid {
  position: relative;
  flex: 1;
  min-width: 0;
  overflow: hidden;
}

.grid table {
  width: 100%;
  table-layout: fixed;
  border-spacing: 0;
  background: #fff;
}

.c-row { width: 22px; }
.c-A { width: 29px; }
.c-B { width: 108px; }
.c-C { width: 44px; }
.c-D { width: 30px; }
.c-E { width: 40px; }
.c-F { width: 78px; }
.c-G { width: 85px; }
.c-H { width: 22px; }
.c-I { width: 64px; }
.c-J { width: 37px; }
.c-K { width: 112px; }
.c-Q { width: 99px; }
.c-L, .c-M, .c-N, .c-O, .c-P, .c-R, .c-S, .c-T, .c-U { width: 62px; }

.grid th {
  height: 16px;
  padding: 1px 0 0;
  background: #efefef;
  color: #444;
  font: 11px/14px "Liberation Sans", Arial, sans-serif;
}

.grid thead th {
  border-left: 1px solid #d6d6d6;
}

.grid thead th.corner {
  border-left: 0;
}

.corner svg {
  margin: 4px 3px 0 auto;
}

.grid thead th.current {
  background: #e0e0e0;
  box-shadow: inset 0 -2px #1f7346;
  color: #1f7346;
}

.grid tbody th {
  border-top: 1px solid #dcdcdc;
}

.grid tbody th.current {
  background: #e0e0e0;
  box-shadow: inset -2px 0 #1f7346;
  color: #1f7346;
}

.grid td {
  height: 16px;
  padding: 1px 3px 0 2px;
  border-top: 1px solid #dcdcdc;
  border-left: 1px solid #dcdcdc;
  color: #000;
  font: 10px/14px Lato, "Open Sans", sans-serif;
  white-space: nowrap;
}

.grid tr:first-child td {
  border-top-color: #999;
}

.grid tbody th + td {
  border-left-color: #999;
}

.grid .head {
  background: #003366;
  border-color: #003366;
  color: #fff;
  font-weight: bold;
}

.grid .blue {
  background: #cce5ff;
  border-color: #cce5ff;
}

.grid .yellow {
  background: #ffff99;
  border-color: #ffff99;
}

.grid .orange {
  background: #ff8000;
  border-color: #ff8000;
}

.grid td.green {
  background: #90ee90;
  border-color: #90ee90;
}

.grid .num {
  text-align: right;
}

.tofu {
  display: inline-block;
  width: 6px;
  height: 7px;
  border: 1px solid #333;
  font: 5px/5px "DejaVu Sans", sans-serif;
  text-align: center;
}

.grid .selected {
  position: relative;
}

.selected::before {
  content: "";
  position: absolute;
  inset: -2px;
  border: 2px solid #1f7346;
}

.drop {
  position: absolute;
  left: 100%;
  top: -1px;
  display: flex;
  align-items: center;
  justify-content: center;
  width: 17px;
  height: 17px;
  background: #fff;
  border: 1px solid #a5abba;
}

.marks {
  position: absolute;
  left: 22px;
  top: 0;
}

.carton {
  position: absolute;
  left: 673px;
  top: 372px;
  width: 184px;
  height: 64px;
  background: #efefef;
  border: 1px solid #fff;
  border-right-color: #696969;
  border-bottom-color: #696969;
  box-shadow: inset -1px -1px #a0a0a0;
  color: #000;
  font: 10px/14px Lato, "Open Sans", sans-serif;
}

.memo {
  position: absolute;
  left: 38px;
  top: 301px;
  margin: 0;
  color: #000;
  font: 24px/40px "Liberation Sans", Arial, sans-serif;
  white-space: nowrap;
}

.vscroll {
  display: flex;
  flex-direction: column;
  align-items: center;
  gap: 3px;
  width: 22px;
  padding: 7px 0 3px;
}

.vthumb {
  flex: 1;
  width: 9px;
  margin-bottom: 30px;
  background: #6e6e6e;
  border-radius: 4px;
}

/* sheet tabs */
.sheets {
  display: flex;
  align-items: center;
  flex: none;
  height: 31px;
  border-top: 1px solid #dcdcdc;
  border-bottom: 1px solid #fff;
  font-size: 13px;
}

.arrows {
  display: flex;
  gap: 26px;
  width: 110px;
  padding-left: 28px;
}

.tab {
  display: flex;
  align-items: center;
  justify-content: center;
  height: 18px;
  border-right: 1px solid #c8c8c8;
}

.tab button {
  white-space: nowrap;
}

.green button {
  width: calc(100% - 9px);
  height: 24px;
  background: #00b050;
  border-radius: 4px;
  color: #111;
}

.front {
  height: 29px;
  border-right: 0;
  align-items: flex-start;
}

.front button {
  width: 59px;
  height: 26px;
  background: linear-gradient(#fff 20%, #8fdcb1);
  border: 1px solid #fff;
  border-radius: 0 0 5px 5px;
  box-shadow: 0 0 2px rgba(0, 0, 0, 0.3);
  font-weight: bold;
  text-decoration: underline 2px #107c41;
  text-underline-offset: 4px;
}

.tool {
  width: 42px;
  font-size: 10px;
}

.add {
  width: 22px;
}

.add svg {
  margin: 0 auto;
}

.vdots {
  margin: 0 16px 0 21px;
}

.hscroll {
  display: flex;
  align-items: center;
  gap: 5px;
  flex: 1;
  height: 17px;
  margin-right: 19px;
  padding: 0 5px 0 4px;
  background: #f5f5f5;
  border-radius: 8px;
}

.hthumb {
  flex: 1;
  height: 9px;
  margin-right: 23px;
  background: #6e6e6e;
  border-radius: 4px;
}

/* status bar */
.status {
  display: flex;
  align-items: center;
  flex: none;
  height: 22px;
  padding-left: 12px;
  background: #f4f4f4;
  font-size: 11px;
}

.status b {
  font-family: "Open Sans", sans-serif;
  font-weight: 600;
}

.ready {
  width: 50px;
}

.acc {
  margin: 0 3px 0 17px;
}

.views {
  display: flex;
  align-items: center;
  align-self: stretch;
  margin-left: auto;
}

.view {
  display: flex;
  align-items: center;
  justify-content: center;
  width: 40px;
  height: 100%;
}

.on {
  background: #e0e0e0;
}

.minus {
  margin: 0 6px;
}

input[type="range"] {
  appearance: none;
  width: 100px;
  height: 12px;
  margin-right: 4px;
  background:
    linear-gradient(#555, #555) 50px 50% / 1px 5px no-repeat,
    linear-gradient(#777, #777) 0 50% / 100% 1px no-repeat;
}

input[type="range"]::-webkit-slider-thumb {
  appearance: none;
  width: 5px;
  height: 11px;
  background: #666;
}

.pct {
  width: 50px;
  padding-left: 12px;
  white-space: nowrap;
}

/* taskbar */
.taskbar {
  display: flex;
  flex: none;
  height: 40px;
  color: #fff;
  background: linear-gradient(90deg, #2e2a2d 0, #3a2226 12%, #451f24 26%, #3f3425 32%, #3c3526 52%, #3c2a22 56%, #42202c 59%, #472433 70%, #352434 75%, #222b3a 78%, #1c2b3a 100%);
}

.start {
  display: flex;
  align-items: center;
  justify-content: center;
  width: 48px;
}

.tsearch {
  display: flex;
  align-items: center;
  gap: 10px;
  width: 288px;
  padding: 0 12px;
  background: #f1f1f1;
  border: 1px solid #b8b8b8;
}

.tsearch input {
  flex: 1;
  min-width: 0;
  font-size: 14px;
}

.tsearch input::placeholder {
  color: #444;
}

.app {
  display: flex;
  align-items: center;
  justify-content: center;
  width: 49px;
}

.gap {
  margin-left: 1px;
}

.open {
  background: linear-gradient(#76b9ed, #76b9ed) 50% 100% / 40px 2px no-repeat;
}

.current.app {
  background: #5f574b;
  border-bottom: 2px solid #76b9ed;
}

.tray {
  display: flex;
  align-items: center;
  gap: 9px;
  margin-left: auto;
  padding-right: 24px;
}

.weather {
  display: flex;
  align-items: center;
  gap: 9px;
  margin-right: 15px;
  font-size: 13px;
}

.weather text {
  fill: #fff;
  font: bold 9px "Open Sans", sans-serif;
}

.up {
  margin-right: 3px;
}

.clock {
  margin: 0 8px 0 -1px;
  font-size: 11px;
  line-height: 18px;
  text-align: center;
}

/* race results laid over the ribbon and the sheet */
.results {
  position: absolute;
  left: 689px;
  top: 153px;
  display: flex;
  flex-direction: column;
  gap: 13px;
  width: 251px;
  background: #fff;
  font: 11px/18px "DejaVu Sans", Verdana, sans-serif;
}

.pmu h3 {
  height: 20px;
  margin: 0;
  padding-left: 2px;
  background: #00b050;
  color: #fff;
  font: italic bold 13px/17px "DejaVu Sans", Verdana, sans-serif;
}

.pmu table {
  width: 100%;
  table-layout: fixed;
  border-spacing: 0;
  border-bottom: 1px solid #999;
}

.pmu:last-child table {
  border-bottom: 0;
}

.pmu th,
.pmu td {
  height: 21px;
  padding: 2px 2px 0;
  border-top: 1px solid #999;
  background: #f4f4f4;
  color: #333;
  text-align: left;
}

.pmu td {
  padding-right: 3px;
  text-align: right;
}

.pmu tbody tr:nth-child(odd) > * {
  background: #ebebeb;
}

.pmu thead th {
  height: 33px;
  color: #000;
  font-weight: normal;
}

.pmu thead svg {
  margin: -6px auto 0;
}

.pmu text {
  fill: #fff;
  font: italic bold 12px "Open Sans", sans-serif;
}

.pmu .price {
  width: 96px;
  border-left: 1px solid #999;
}

.pmu thead .price {
  text-align: center;
}

.pmu tbody td.price {
  background: #fefdf5;
}

.pmu tbody tr:nth-child(odd) td.price {
  background: #fdfce6;
}
</style>
